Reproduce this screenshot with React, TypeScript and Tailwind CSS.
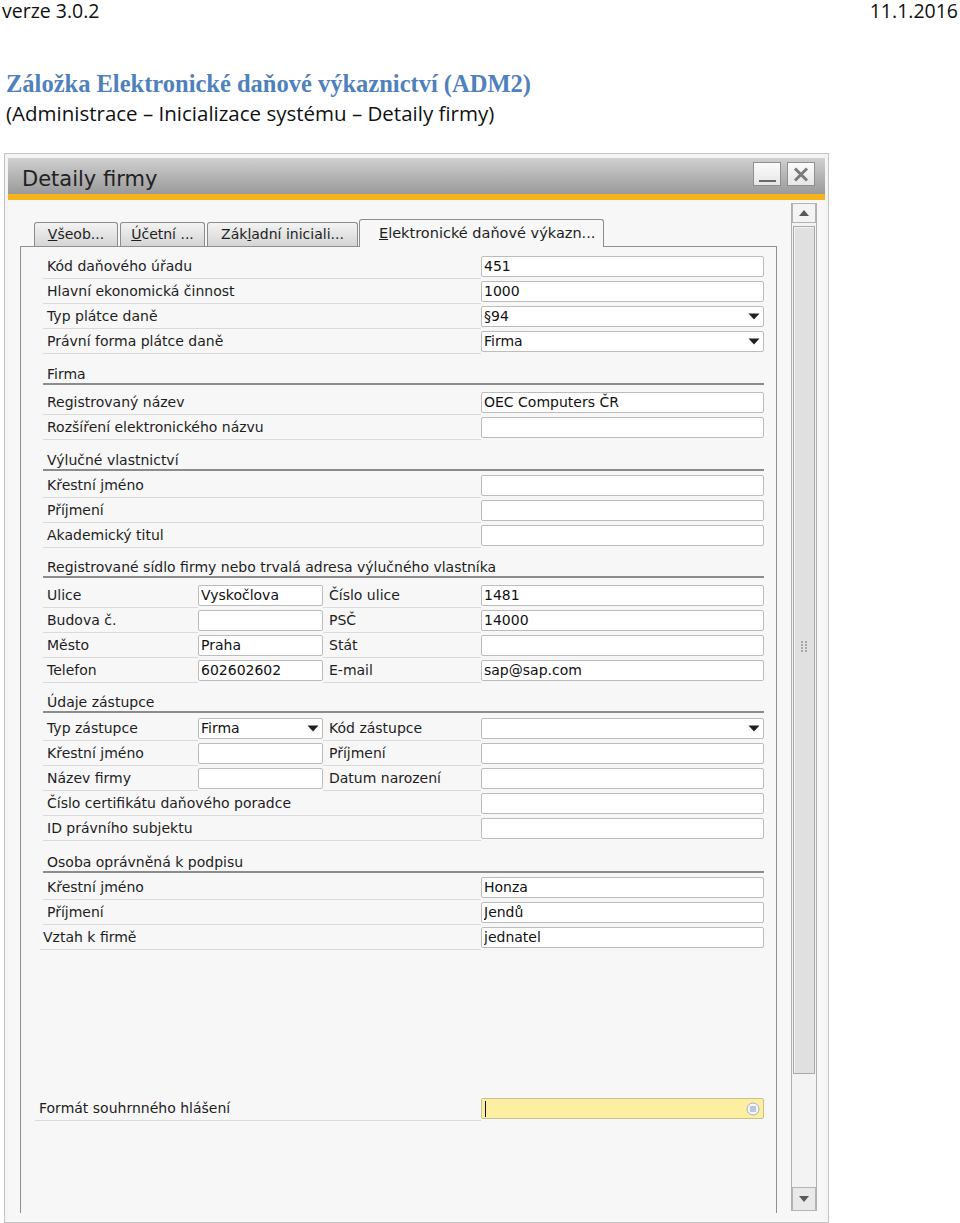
import React from 'react'

const ui = "font-['DejaVu_Sans',sans-serif]"

function Arrow() {
  return (
    <svg width="12" height="7" viewBox="0 0 12 7" className="shrink-0">
      <path d="M0.5 0.5 H11.5 L6 6.5 Z" fill="#1f1f1f" />
    </svg>
  )
}

type InputProps = { value?: string; w?: string; dropdown?: boolean }

function Input({ value = '', w = 'w-[283px]', dropdown = false }: InputProps) {
  return (
    <div className="flex items-center">
      <div
        className={`${w} h-[21px] shrink-0 flex items-center rounded-[2px] border border-[#bcbcbc] bg-white pl-[2px] pr-[3px] text-[#111]`}
      >
        <span className="flex-1 whitespace-nowrap overflow-hidden leading-[19px]">{value}</span>
        {dropdown && <Arrow />}
      </div>
    </div>
  )
}

function Label({ text, w, pl = 'pl-[4px]' }: { text: string; w: string; pl?: string }) {
  return (
    <div className={`${w} ${pl} shrink-0 flex items-center border-b border-[#dadada] whitespace-nowrap`}>
      {text}
    </div>
  )
}

type RowData = { label: string; value?: string; dropdown?: boolean }

function Row({ label, value, dropdown }: RowData) {
  return (
    <div className="flex h-[25px]">
      <Label text={label} w="w-[438px]" />
      <Input value={value} dropdown={dropdown} />
    </div>
  )
}

type QuadData = {
  l1: string
  v1?: string
  d1?: boolean
  l2: string
  v2?: string
  d2?: boolean
}

function QuadRow({ l1, v1, d1, l2, v2, d2 }: QuadData) {
  return (
    <div className="flex h-[25px]">
      <Label text={l1} w="w-[155px]" />
      <Input value={v1} dropdown={d1} w="w-[125px]" />
      <Label text={l2} w="w-[158px]" pl="pl-[6px]" />
      <Input value={v2} dropdown={d2} />
    </div>
  )
}

function Section({ title, h, mb }: { title: string; h: string; mb: string }) {
  return (
    <div className={`${h} ${mb} flex flex-col justify-end`}>
      <div className="w-[721px] border-b-2 border-[#8c8c8c] pl-[4px] leading-[18px] whitespace-nowrap">
        {title}
      </div>
    </div>
  )
}

const block1: RowData[] = [
  { label: 'Kód daňového úřadu', value: '451' },
  { label: 'Hlavní ekonomická činnost', value: '1000' },
  { label: 'Typ plátce daně', value: '§94', dropdown: true },
  { label: 'Právní forma plátce daně', value: 'Firma', dropdown: true },
]

const firma: RowData[] = [
  { label: 'Registrovaný název', value: 'OEC Computers ČR' },
  { label: 'Rozšíření elektronického názvu' },
]

const vlastnictvi: RowData[] = [
  { label: 'Křestní jméno' },
  { label: 'Příjmení' },
  { label: 'Akademický titul' },
]

const adresa: QuadData[] = [
  { l1: 'Ulice', v1: 'Vyskočlova', l2: 'Číslo ulice', v2: '1481' },
  { l1: 'Budova č.', l2: 'PSČ', v2: '14000' },
  { l1: 'Město', v1: 'Praha', l2: 'Stát' },
  { l1: 'Telefon', v1: '602602602', l2: 'E-mail', v2: 'sap@sap.com' },
]

const zastupce: QuadData[] = [
  { l1: 'Typ zástupce', v1: 'Firma', d1: true, l2: 'Kód zástupce', d2: true },
  { l1: 'Křestní jméno', l2: 'Příjmení' },
  { l1: 'Název firmy', l2: 'Datum narození' },
]

const podpis: RowData[] = [
  { label: 'Křestní jméno', value: 'Honza' },
  { label: 'Příjmení', value: 'Jendů' },
]

function Tab({ children, w }: { children: React.ReactNode; w: string }) {
  return (
    <div
      className={`${w} h-[24px] mr-[2px] flex items-center justify-center rounded-t-[3px] border border-b-0 border-[#8c8c8c] bg-linear-to-b from-[#f3f3f3] to-[#d5d5d5] whitespace-nowrap`}
    >
      {children}
    </div>
  )
}

function Scrollbar() {
  return (
    <div className="ml-[14px] mt-[3px] w-[26px] h-[1008px] flex flex-col border-x border-[#b0b0b0] bg-[#f3f3f3]">
      <div className="h-[20px] flex items-center justify-center border border-[#b4b4b4] bg-[#f4f4f4]">
        <svg width="10" height="6" viewBox="0 0 10 6">
          <path d="M0 6 L5 0 L10 6 Z" fill="#5a5a5a" />
        </svg>
      </div>
      <div className="mt-[3px] h-[848px] mx-[1px] flex items-center justify-center border border-[#a9a9a9] bg-[#e0e0e0] shadow-[inset_1px_1px_0_#f4f4f4]">
        <svg width="7" height="12" viewBox="0 0 7 12" className="mt-[-6px]">
          {[0, 3, 6, 9].map((y) => (
            <g key={y}>
              <rect x="0" y={y} width="2" height="2" fill="#a8a8a8" />
              <rect x="4" y={y} width="2" height="2" fill="#a8a8a8" />
            </g>
          ))}
        </svg>
      </div>
      <div className="flex-1" />
      <div className="h-[24px] flex items-center justify-center border border-[#b4b4b4] bg-[#e9e9e9]">
        <svg width="10" height="6" viewBox="0 0 10 6">
          <path d="M0 0 L10 0 L5 6 Z" fill="#5a5a5a" />
        </svg>
      </div>
    </div>
  )
}

export default function App() {
  return (
    <div className="w-[960px] h-[1223px] overflow-hidden bg-white text-black">
      {/* page header */}
      <div className="h-[22px] pt-[1px] px-[2px] flex justify-between font-['Open_Sans',sans-serif] text-[19.5px] leading-[20px] text-[#111]">
        <span>verze 3.0.2</span>
        <span>11.1.2016</span>
      </div>
      <div className="mt-[46px] pl-[6px] h-[32px] leading-[32px] font-['Liberation_Serif',serif] font-bold text-[24.5px] text-[#4f81bd]">
        Záložka Elektronické daňové výkaznictví (ADM2)
      </div>
      <div className="pl-[6px] h-[26px] leading-[26px] font-['Open_Sans',sans-serif] text-[20.5px] text-[#111]">
        (Administrace – Inicializace systému – Detaily firmy)
      </div>

      {/* window */}
      <div className={`${ui} ml-[4px] mt-[27px] w-[825px] h-[1070px] border border-[#c4c4c4] bg-[#f4f4f4] px-[3px] pt-[4px] flex flex-col text-[14px] text-[#1e1e1e]`}>
        <div className="h-[36px] shrink-0 flex items-start justify-between bg-linear-to-b from-[#d0d0d0] to-[#9a9a9a] pl-[14px] pr-[10px]">
          <span className="mt-[3px] text-[21px] leading-[36px] text-[#222]">Detaily firmy</span>
          <div className="flex gap-[6px] mt-[4px]">
            <div className="w-[28px] h-[24px] border border-[#8f8f8f] bg-linear-to-b from-[#fbfbfb] to-[#e6e6e6] flex items-end justify-center pb-[3px]">
              <div className="w-[17px] h-[2px] bg-[#6a6a6a]" />
            </div>
            <div className="w-[28px] h-[24px] border border-[#8f8f8f] bg-linear-to-b from-[#fbfbfb] to-[#e6e6e6] flex items-center justify-center">
              <svg width="16" height="15" viewBox="0 0 16 15">
                <path d="M2 1.5 L14 13.5 M14 1.5 L2 13.5" stroke="#7b7b7b" strokeWidth="3" />
              </svg>
            </div>
          </div>
        </div>
        <div className="h-[6px] shrink-0 bg-[#f6b31b]" />

        <div className="flex-1 flex bg-[#f7f7f7] pl-[12px]">
          {/* tab panel */}
          <div className="w-[757px] pt-[19px] flex flex-col">
            <div className="h-[27px] flex items-end pl-[14px] relative z-10">
              <Tab w="w-[84px]">
                <span className="underline">V</span>šeob...
              </Tab>
              <Tab w="w-[85px]">
                <span className="underline">Ú</span>četní ...
              </Tab>
              <Tab w="w-[151px]">
                Zák<span className="underline">l</span>adní iniciali...
              </Tab>
              <div className="w-[245px] h-[28px] -mb-[1px] -ml-[1px] flex items-center pl-[19px] rounded-t-[3px] border border-b-0 border-[#8c8c8c] bg-[#f7f7f7] whitespace-nowrap text-[14.5px]">
                <span className="underline">E</span>lektronické daňové výkazn...
              </div>
            </div>

            <div className="h-[967px] border-x border-t border-[#8f8f8f] pt-[7px] pl-[22px]">
              {block1.map((r) => (
                <Row key={r.label} {...r} />
              ))}

              <Section title="Firma" h="h-[31px]" mb="mb-[5px]" />
              {firma.map((r) => (
                <Row key={r.label} {...r} />
              ))}

              <Section title="Výlučné vlastnictví" h="h-[31px]" mb="mb-[2px]" />
              {vlastnictvi.map((r) => (
                <Row key={r.label} {...r} />
              ))}

              <Section
                title="Registrované sídlo firmy nebo trvalá adresa výlučného vlastníka"
                h="h-[30px]"
                mb="mb-[5px]"
              />
              {adresa.map((r) => (
                <QuadRow key={r.l1} {...r} />
              ))}

              <Section title="Údaje zástupce" h="h-[30px]" mb="mb-[3px]" />
              {zastupce.map((r) => (
                <QuadRow key={r.l1} {...r} />
              ))}
              <Row label="Číslo certifikátu daňového poradce" />
              <Row label="ID právního subjektu" />

              <Section title="Osoba oprávněná k podpisu" h="h-[32px]" mb="mb-[2px]" />
              {podpis.map((r) => (
                <Row key={r.label} {...r} />
              ))}
              <div className="flex h-[25px] -ml-[3px]">
                <Label text="Vztah k firmě" w="w-[441px]" pl="pl-[3px]" />
                <Input value="jednatel" />
              </div>

              <div className="h-[146px]" />

              {/* yellow field row */}
              <div className="flex h-[25px] -ml-[8px]">
                <Label text="Formát souhrnného hlášení" w="w-[446px]" />
                <div className="flex items-center">
                  <div className="w-[283px] h-[21px] flex items-center rounded-[2px] border border-[#c9bf8f] bg-[#fdefa2] pl-[3px] pr-[3px]">
                    <div className="w-[1px] h-[16px] bg-[#111]" />
                    <div className="flex-1" />
                    <svg width="14" height="14" viewBox="0 0 14 14">
                      <circle cx="7" cy="7" r="6" fill="#f4f6fa" stroke="#a6b0c2" strokeWidth="1" />
                      <path d="M4 5 H10 M4 7 H10 M4 9 H10" stroke="#8a96ab" strokeWidth="1" />
                    </svg>
                  </div>
                </div>
              </div>
            </div>
          </div>

          <Scrollbar />
        </div>
      </div>
    </div>
  )
}
